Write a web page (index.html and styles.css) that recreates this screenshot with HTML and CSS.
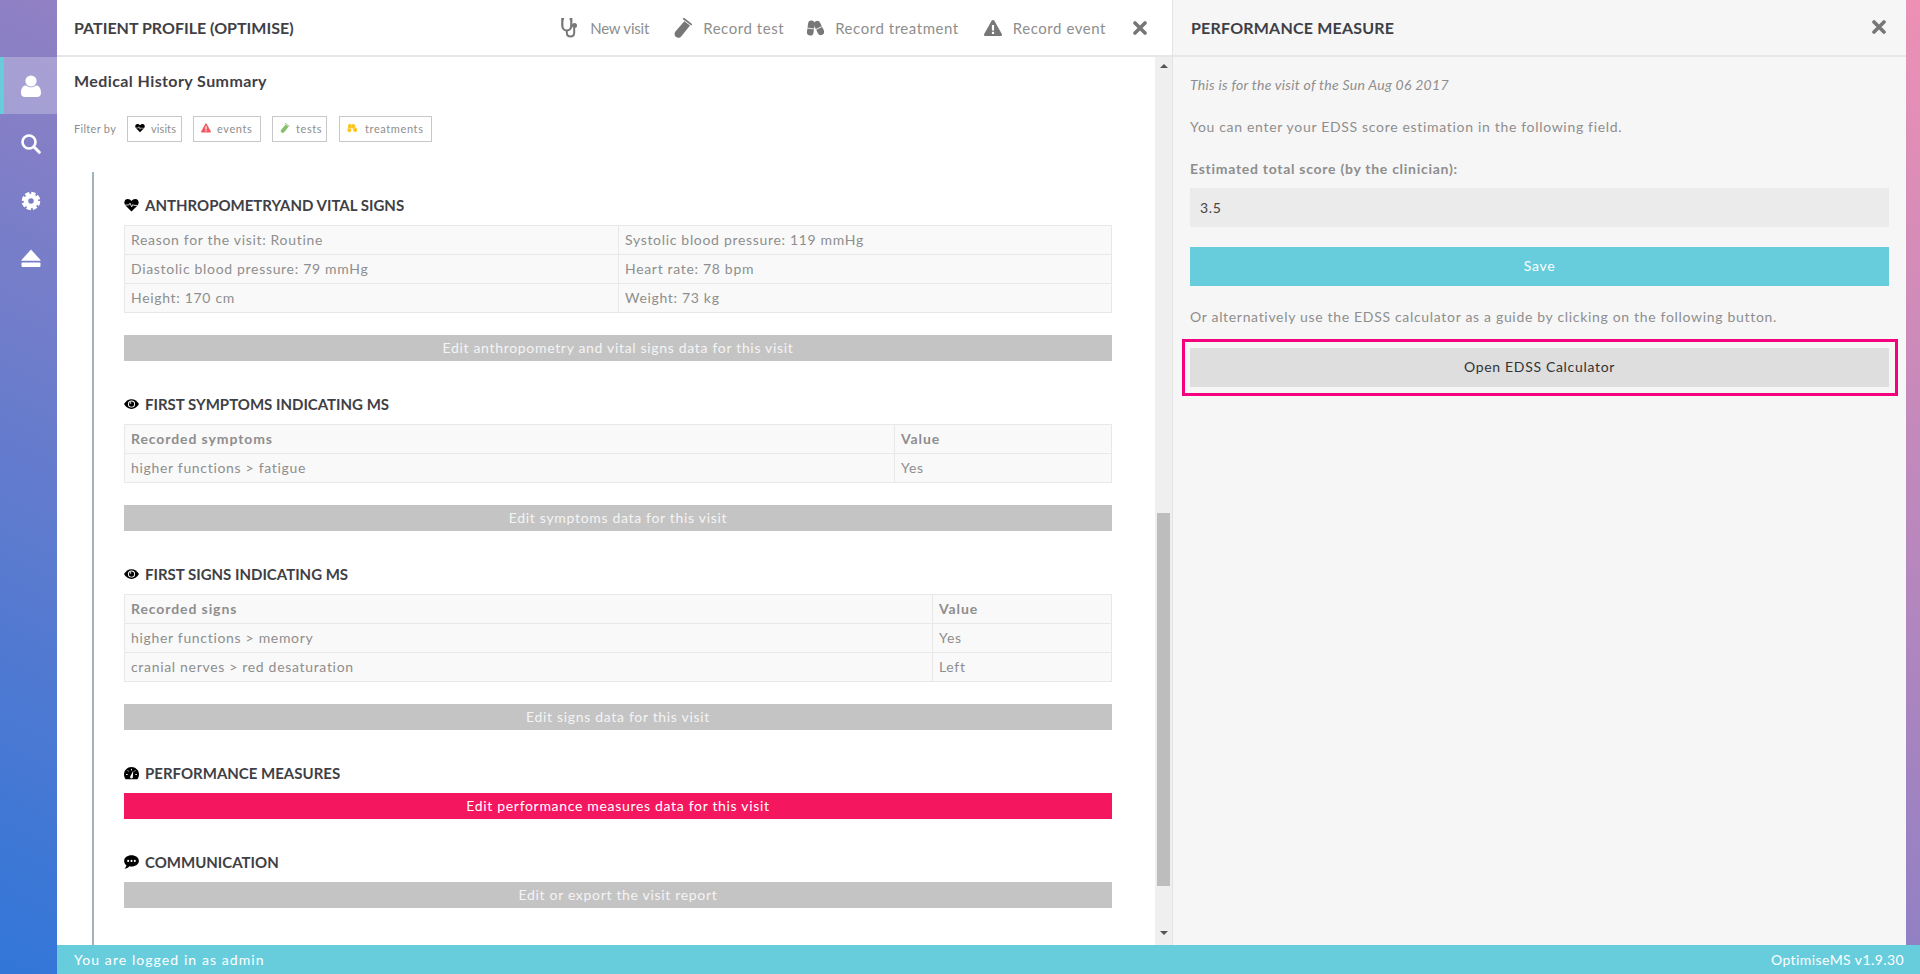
FILE: index.html
```html
<!DOCTYPE html>
<html lang="en">
<head>
  <meta charset="UTF-8" />
  <meta name="viewport" content="width=device-width, initial-scale=1.0" />
  <title>OptimiseMS</title>
  <link rel="stylesheet" href="styles.css">
</head>
<body>
  <svg class="sprite" xmlns="http://www.w3.org/2000/svg">
    <symbol id="i-user" viewBox="0 0 20 22">
      <circle cx="10" cy="6" r="5.6" />
      <path d="M0 18c0-5 2-7.500 5-7.500 1.500 1.200 3 1.800 5 1.800s3.500-.6 5-1.800c3 0 5 2.500 5 7.500 0 2.500-1.500 4-4 4H4c-2.500 0-4-1.500-4-4z" />
    </symbol>
    <symbol id="i-search" viewBox="0 0 20 20">
      <circle cx="8" cy="8" r="6.500" fill="none" stroke="currentColor" stroke-width="2.600" />
      <path d="M12.800 12.800L18.300 18.300" fill="none" stroke="currentColor" stroke-width="3" stroke-linecap="round" />
    </symbol>
    <symbol id="i-cog" viewBox="0 0 20 20">
      <circle cx="10" cy="10" r="5" fill="none" stroke="currentColor" stroke-width="4.500" />
      <circle cx="10" cy="10" r="7.800" fill="none" stroke="currentColor" stroke-width="3" stroke-dasharray="4.300 1.825" />
    </symbol>
    <symbol id="i-eject" viewBox="0 0 20 20">
      <path d="M10 1.500L19.500 12a.5.5 0 0 1-.4.800H.9a.5.5 0 0 1-.4-.8z" />
      <rect x="0.500" y="14.500" width="19" height="4.500" rx="1" />
    </symbol>
    <symbol id="i-heart" viewBox="0 0 20 18">
      <path d="M10 17.500L2 9.500C-.8 6.500.2 1 5 1c2.400 0 3.800 1.200 5 2.700C11.200 2.200 12.600 1 15 1c4.800 0 5.800 5.500 3 8.500z" />
      <path d="M1.500 9h5l1.500-2.500 2.200 5 1.600-3.200 1 1.200h5" fill="none" stroke="#fff" stroke-width="1.100" />
    </symbol>
    <symbol id="i-eye" viewBox="0 0 20 14">
      <path d="M0 7c2.200-3.900 5.800-6.500 10-6.500S17.800 3.100 20 7c-2.200 3.900-5.800 6.500-10 6.500S2.200 10.900 0 7z" />
      <circle cx="10" cy="7" r="4.800" fill="#fff" />
      <circle cx="10" cy="7" r="3.500" />
      <circle cx="8.700" cy="5.600" r="1.100" fill="#fff" />
    </symbol>
    <symbol id="i-gauge" viewBox="0 0 20 17">
      <path d="M10 .5C4.500.5 0 5 0 10.500c0 2.400.8 4.600 2.200 6.300h15.600c1.400-1.700 2.200-3.900 2.200-6.300C20 5 15.500.5 10 .5z" />
      <path d="M10 3v2M5 5l1.200 1.400M15 5l-1.200 1.400M2.800 10.500h2M15.200 10.500h2" stroke="#fff" stroke-width="1.300" fill="none" />
      <path d="M12.300 5.500L8.500 12.800a1.900 1.900 0 1 0 3.300.6z" fill="#fff" />
    </symbol>
    <symbol id="i-comment" viewBox="0 0 20 19">
      <path d="M10 .5c5.500 0 10 3.300 10 7.500s-4.500 7.500-10 7.500c-1 0-2-.1-2.900-.3C5.500 16.900 3 18.400.5 18.500c1.400-1.300 2.400-2.900 2.600-4.700C1.200 12.400 0 10.300 0 8 0 3.800 4.500.5 10 .5z" />
      <circle cx="5.500" cy="8" r="1.400" fill="#fff" />
      <circle cx="10" cy="8" r="1.400" fill="#fff" />
      <circle cx="14.500" cy="8" r="1.400" fill="#fff" />
    </symbol>
    <symbol id="i-steth" viewBox="0 0 18 20">
      <path d="M3 1.200H1.300v6.300c0 3 2 5 4.500 5s4.500-2 4.500-5V1.200H8.600" fill="none" stroke="currentColor" stroke-width="2.200" />
      <path d="M5.800 12.500v2c0 2.500 1.700 4 3.700 4s3.700-1.500 3.700-4V9.500" fill="none" stroke="currentColor" stroke-width="2" />
      <circle cx="13.500" cy="7.500" r="2.500" />
    </symbol>
    <symbol id="i-tube" viewBox="0 0 18 20">
      <path d="M10.300 3.200L16 7.500 7.400 18.300c-1.400 1.700-3.800 2-5.400.7-1.700-1.300-1.900-3.700-.6-5.400z" />
      <path d="M9.800.8l7.400 5.600" stroke="currentColor" stroke-width="1.800" stroke-linecap="round" />
    </symbol>
    <symbol id="i-pills" viewBox="0 0 18 16">
      <g transform="rotate(8 4.500 8)">
        <rect x="1.500" y=".5" width="6.600" height="15" rx="3.300" />
        <path d="M1 8.500h8" stroke="#fff" stroke-width=".8" />
      </g>
      <g transform="rotate(-26 13 8)">
        <rect x="9.700" y=".5" width="6.600" height="15" rx="3.300" />
        <path d="M9 8h8" stroke="#fff" stroke-width=".8" />
      </g>
    </symbol>
    <symbol id="i-warn" viewBox="0 0 18 16">
      <path d="M9 0c.6 0 1.100.3 1.400.8l7.400 13.300c.5 1-.2 1.900-1.200 1.900H1.400C.4 16-.3 15.100.2 14.100L7.600.8C7.900.3 8.400 0 9 0z" />
      <path d="M9 5v5.500" stroke="#fff" stroke-width="2.200" />
      <rect x="7.900" y="11.800" width="2.200" height="2.200" fill="#fff" />
    </symbol>
    <symbol id="i-times" viewBox="0 0 14 14">
      <path d="M2 2l10 10M12 2L2 12" fill="none" stroke="currentColor" stroke-width="3.600" stroke-linecap="round" />
    </symbol>
  </svg>

  <div class="app">
    <nav class="sidebar">
      <div class="sideTop"></div>
      <a class="sideItem active"><svg class="sideIcon"><use href="#i-user" /></svg></a>
      <a class="sideItem"><svg class="sideIcon"><use href="#i-search" /></svg></a>
      <a class="sideItem"><svg class="sideIcon"><use href="#i-cog" /></svg></a>
      <a class="sideItem"><svg class="sideIcon"><use href="#i-eject" /></svg></a>
    </nav>

    <div class="panels">
      <section class="profile">
        <header class="panelHead">
          <h1 class="profileTitle">PATIENT PROFILE (OPTIMISE)</h1>
          <div class="actions">
            <a class="action tight"><svg class="actionIcon"><use href="#i-steth" /></svg>New visit</a>
            <a class="action actionTest"><svg class="actionIcon"><use href="#i-tube" /></svg>Record test</a>
            <a class="action"><svg class="actionIcon"><use href="#i-pills" /></svg>Record treatment</a>
            <a class="action"><svg class="actionIcon"><use href="#i-warn" /></svg>Record event</a>
            <svg class="closeIcon"><use href="#i-times" /></svg>
          </div>
        </header>

        <div class="profileBody">
          <div class="scrollArea">
            <h2>Medical History Summary</h2>
            <div class="filters">
              <span class="filterLabel">Filter by</span>
              <span class="chip chipVisits"><svg class="chipIcon black"><use href="#i-heart" /></svg>visits</span>
              <span class="chip chipEvents"><svg class="chipIcon red"><use href="#i-warn" /></svg>events</span>
              <span class="chip chipTests"><svg class="chipIcon green"><use href="#i-tube" /></svg>tests</span>
              <span class="chip chipTreat"><svg class="chipIcon yellow"><use href="#i-pills" /></svg>treatments</span>
            </div>

            <div class="timeline">
              <div class="entry">
                <h3><svg class="headIcon"><use href="#i-heart" /></svg>ANTHROPOMETRYAND VITAL SIGNS</h3>
                <table>
                  <tr><td class="half">Reason for the visit: Routine</td><td>Systolic blood pressure: 119 mmHg</td></tr>
                  <tr><td>Diastolic blood pressure: 79 mmHg</td><td>Heart rate: 78 bpm</td></tr>
                  <tr><td>Height: 170 cm</td><td>Weight: 73 kg</td></tr>
                </table>
                <button class="editBtn">Edit anthropometry and vital signs data for this visit</button>
              </div>

              <div class="entry">
                <h3><svg class="headIcon"><use href="#i-eye" /></svg>FIRST SYMPTOMS INDICATING MS</h3>
                <table>
                  <tr><th class="colSymptoms">Recorded symptoms</th><th>Value</th></tr>
                  <tr><td>higher functions &gt; fatigue</td><td>Yes</td></tr>
                </table>
                <button class="editBtn">Edit symptoms data for this visit</button>
              </div>

              <div class="entry">
                <h3><svg class="headIcon"><use href="#i-eye" /></svg>FIRST SIGNS INDICATING MS</h3>
                <table>
                  <tr><th class="colSigns">Recorded signs</th><th>Value</th></tr>
                  <tr><td>higher functions &gt; memory</td><td>Yes</td></tr>
                  <tr><td>cranial nerves &gt; red desaturation</td><td>Left</td></tr>
                </table>
                <button class="editBtn">Edit signs data for this visit</button>
              </div>

              <div class="entry">
                <h3><svg class="headIcon"><use href="#i-gauge" /></svg>PERFORMANCE MEASURES</h3>
                <button class="editBtn noTable selected">Edit performance measures data for this visit</button>
              </div>

              <div class="entry">
                <h3><svg class="headIcon"><use href="#i-comment" /></svg>COMMUNICATION</h3>
                <button class="editBtn noTable">Edit or export the visit report</button>
              </div>
            </div>
          </div>

          <div class="scrollbar">
            <span class="arrowUp"></span>
            <div class="thumb"></div>
            <span class="arrowDown"></span>
          </div>
        </div>
      </section>

      <aside class="measure">
        <header class="panelHead measureHead">
          <h1>PERFORMANCE MEASURE</h1>
          <svg class="closeIcon"><use href="#i-times" /></svg>
        </header>
        <div class="measureBody">
          <p class="visitDate">This is for the visit of the Sun Aug 06 2017</p>
          <p class="hint">You can enter your EDSS score estimation in the following field.</p>
          <label class="scoreLabel" for="score">Estimated total score (by the clinician):</label>
          <input id="score" class="scoreInput" type="text" value="3.5" />
          <button class="saveBtn">Save</button>
          <p class="hint altHint">Or alternatively use the EDSS calculator as a guide by clicking on the following button.</p>
          <div class="highlight">
            <button class="calcBtn">Open EDSS Calculator</button>
          </div>
        </div>
      </aside>
    </div>

    <footer class="footer">
      <span class="loggedIn">You are logged in as admin</span>
      <span>OptimiseMS v1.9.30</span>
    </footer>
  </div>
</body>
</html>
```

FILE: styles.css
```css
* {
  box-sizing: border-box;
}

html,
body {
  height: 100%;
  overflow: hidden;
}

body {
  margin: 0;
  font-family: "Lato", "Liberation Sans", sans-serif;
  font-size: 14px;
  letter-spacing: 0.68px;
  color: #8e8e8e;
  background: linear-gradient(to top right, #3176d8, #8f80c4 50%, #ee90b4);
}

.sprite {
  display: none;
}

.app {
  display: grid;
  grid-template-columns: 57px 1fr;
  grid-template-rows: 1fr 29px;
  height: 100%;
}

/* sidebar */
.sidebar {
  grid-row: 1 / 3;
  display: flex;
  flex-direction: column;
}

.sideTop {
  height: 57px;
}

.sideItem {
  display: flex;
  justify-content: center;
  align-items: center;
  height: 57px;
  padding: 3px 0 0 4px;
  color: #fff;
  fill: #fff;
}

.sideItem.active {
  padding-top: 0;
  padding-left: 0;
  background-color: rgba(255, 255, 255, 0.25);
  border-left: 4px solid #67cddd;
}

.sideIcon {
  width: 20px;
  height: 20px;
}

.active .sideIcon {
  height: 22px;
}

/* panels */
.panels {
  display: flex;
  min-height: 0;
  padding-right: 14px;
}

.profile {
  display: flex;
  flex-direction: column;
  width: 1115px;
  background-color: #fff;
}

.panelHead {
  display: flex;
  justify-content: space-between;
  align-items: center;
  flex-shrink: 0;
  height: 57px;
  padding: 0 25px 0 17px;
  border-bottom: 2px solid #e6e6e6;
}

h1 {
  margin: 0;
  font-size: 16px;
  font-weight: 700;
  letter-spacing: 0.2px;
  color: #3f3f46;
}

.profileTitle {
  letter-spacing: 0;
}

.actions {
  display: flex;
  align-items: center;
  gap: 25px;
  font-size: 15px;
  letter-spacing: 0.55px;
}

.action {
  display: flex;
  align-items: center;
  gap: 11px;
}

.actionTest {
  margin-right: -3px;
}

.tight {
  letter-spacing: -0.2px;
}

.actionIcon {
  width: 18px;
  height: 20px;
  color: #777;
  fill: #777;
}

.closeIcon {
  width: 14px;
  height: 14px;
  margin-left: 2px;
  color: #777;
}

.profileBody {
  display: flex;
  flex: 1;
  min-height: 0;
}

.scrollArea {
  flex: 1;
  overflow: hidden;
  padding: 14px 43px 0 17px;
}

h2 {
  margin: 0;
  font-size: 16px;
  font-weight: 700;
  line-height: 20px;
  letter-spacing: 0.41px;
  color: #3f3f46;
}

.filters {
  display: flex;
  align-items: center;
  gap: 11px;
  margin-top: 25px;
  font-size: 11px;
  letter-spacing: 0.6px;
}

.filterLabel {
  width: 42px;
  padding-bottom: 2px;
  letter-spacing: 0.3px;
  white-space: nowrap;
}

.chip {
  display: flex;
  align-items: center;
  height: 26px;
  padding: 0 0 2px 7px;
  border: 1px solid #c8c8c8;
}

.chipVisits {
  width: 55px;
  letter-spacing: 0.1px;
}

.chipEvents {
  width: 68px;
}

.chipTests {
  width: 55px;
  margin-right: 1px;
}

.chipTreat {
  width: 93px;
}

.chipIcon {
  width: 10px;
  height: 10px;
  margin: 0 6px 1px 0;
}

.chipTreat .chipIcon {
  margin-right: 8px;
}

.black {
  fill: #000;
}

.red {
  fill: #f4575f;
}

.green {
  color: #86c06a;
  fill: #86c06a;
}

.yellow {
  fill: #fcc419;
}

.timeline {
  margin: 30px 0 0 18px;
  padding: 24px 0 0 30px;
  border-left: 2px solid #a2b3be;
  height: 773px;
}

.entry {
  margin-bottom: 34px;
}

h3 {
  display: flex;
  align-items: center;
  height: 20px;
  margin: 0 0 9px;
  padding-bottom: 2px;
  font-size: 15px;
  font-weight: 700;
  letter-spacing: 0;
  color: #3f3f46;
}

.headIcon {
  width: 15px;
  height: 14px;
  margin-right: 6px;
  fill: #000;
}

table {
  width: 100%;
  border-collapse: collapse;
  table-layout: fixed;
  background-color: #f9f9f9;
}

td,
th {
  height: 29px;
  padding: 0 6px 2px;
  border: 1px solid #e8e8e8;
  text-align: left;
  font-weight: 400;
}

th {
  font-weight: 700;
  letter-spacing: 0.9px;
}

.half {
  width: 494px;
}

.colSymptoms {
  width: 770px;
}

.colSigns {
  width: 808px;
}

.editBtn {
  display: block;
  width: 100%;
  height: 26px;
  margin-top: 22px;
  padding: 0 0 2px;
  border: none;
  font: inherit;
  letter-spacing: inherit;
  color: #f4f4f4;
  background-color: #c4c4c4;
}

.editBtn.noTable {
  margin-top: 0;
}

.editBtn.selected {
  color: #fff;
  background-color: #f4175f;
}

/* scrollbar */
.scrollbar {
  display: flex;
  flex-direction: column;
  align-items: center;
  flex-shrink: 0;
  width: 17px;
  padding-top: 7px;
  background-color: #efefef;
}

.arrowUp,
.arrowDown {
  width: 0;
  height: 0;
  border-left: 4px solid transparent;
  border-right: 4px solid transparent;
}

.arrowUp {
  border-bottom: 4px solid #555;
}

.arrowDown {
  border-top: 4px solid #555;
  margin-top: 45px;
}

.thumb {
  flex-shrink: 0;
  width: 13px;
  height: 373px;
  margin-top: 445px;
  background-color: #bdbdbd;
}

/* right panel */
.measure {
  display: flex;
  flex-direction: column;
  flex: 1;
  border-left: 1px solid #e3e3e3;
  background-color: #f6f6f6;
}

.measureHead {
  padding: 0 20px 0 18px;
}

.measureHead .closeIcon {
  margin-bottom: 2px;
}

.measureBody {
  padding: 18px 17px 0;
}

.measureBody p {
  margin: 0;
  line-height: 20px;
}

.measureBody .visitDate {
  font-style: italic;
  letter-spacing: 0.28px;
}

.visitDate + .hint {
  margin-top: 22px;
}

.scoreLabel {
  display: block;
  margin-top: 22px;
  line-height: 20px;
  font-weight: 700;
  letter-spacing: 0.72px;
}

.scoreInput {
  display: block;
  width: 100%;
  height: 39px;
  margin-top: 9px;
  padding: 0 10px;
  border: none;
  font: inherit;
  letter-spacing: inherit;
  color: #444;
  background-color: #ebebeb;
}

.saveBtn,
.calcBtn {
  display: block;
  width: 100%;
  height: 39px;
  padding: 0 0 2px;
  border: none;
  font: inherit;
  letter-spacing: inherit;
}

.saveBtn {
  margin-top: 20px;
  color: #fff;
  background-color: #67cddd;
}

.measureBody .altHint {
  margin-top: 21px;
}

.highlight {
  margin: 12px -9px 0 -8px;
  padding: 6px 6px 6px 5px;
  border: 3px solid #f5007e;
}

.calcBtn {
  color: #333;
  background-color: #dedede;
}

/* footer */
.footer {
  display: flex;
  justify-content: space-between;
  align-items: center;
  padding: 0 16px 0 17px;
  letter-spacing: 0.42px;
  color: #fff;
  background-color: #67cddd;
}

.loggedIn {
  letter-spacing: 1.08px;
}
```
